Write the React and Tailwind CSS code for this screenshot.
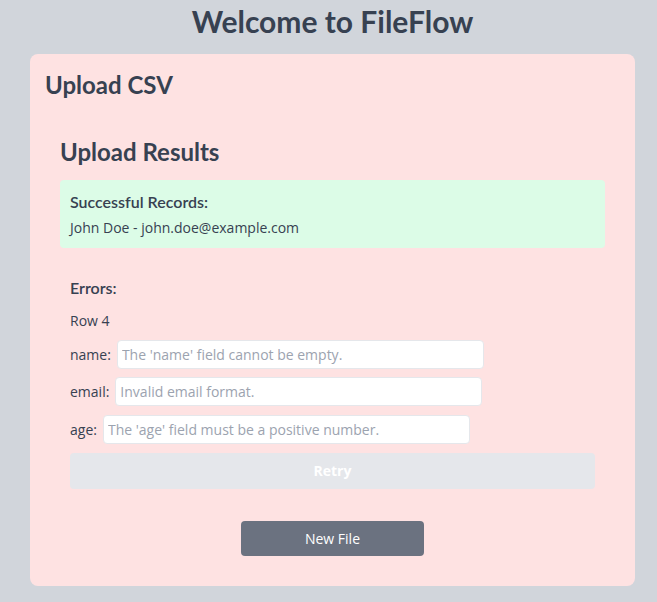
export default function App() {
  const errors = [
    { field: 'name', message: "The 'name' field cannot be empty.", gap: 'mt-[9px]' },
    { field: 'email', message: 'Invalid email format.', gap: 'mt-2' },
    { field: 'age', message: "The 'age' field must be a positive number.", gap: 'mt-[9px]' },
  ];

  return (
    <div className="min-h-screen bg-[#d1d5db] pt-[3px] font-['Open_Sans',sans-serif] text-[#374151]">
      <div className="ml-[30px] w-[605px]">
        <h1 className="text-3xl font-bold text-center mb-[15px] font-['Lato',sans-serif]">Welcome to FileFlow</h1>

        <div className="bg-[#fee2e2] rounded-lg p-[15px]">
          <h2 className="text-2xl font-bold font-['Lato',sans-serif]">Upload CSV</h2>

          <div className="mt-[35px] px-[15px] pb-[15px]">
            <h2 className="text-2xl font-bold mb-3 font-['Lato',sans-serif]">Upload Results</h2>

            <div className="bg-[#dcfce7] rounded p-2.5">
              <h3 className="text-base font-semibold mb-1 font-['Lato',sans-serif]">Successful Records:</h3>
              <p className="text-sm">John Doe - john.doe@example.com</p>
            </div>

            <div className="mt-[18px] p-2.5">
              <h3 className="text-base font-semibold font-['Lato',sans-serif]">Errors:</h3>
              <p className="text-sm mt-[11px]">Row 4</p>
              {errors.map((e) => (
                <div key={e.field} className={`flex items-center gap-1.5 text-sm ${e.gap}`}>
                  <label>{e.field}:</label>
                  <input
                    className="w-[367px] h-[29px] bg-white border border-[#e5e7eb] rounded px-1 text-sm placeholder:text-[#9ca3af]"
                    placeholder={e.message}
                  />
                </div>
              ))}
              <button className="w-full mt-[9px] h-9 rounded bg-[#e5e7eb] text-white text-sm font-bold">
                Retry
              </button>
            </div>

            <div className="flex justify-center mt-[22px]">
              <button className="w-[183px] h-[35px] rounded bg-[#6b7280] text-white text-sm">
                New File
              </button>
            </div>
          </div>
        </div>
      </div>
    </div>
  );
}
